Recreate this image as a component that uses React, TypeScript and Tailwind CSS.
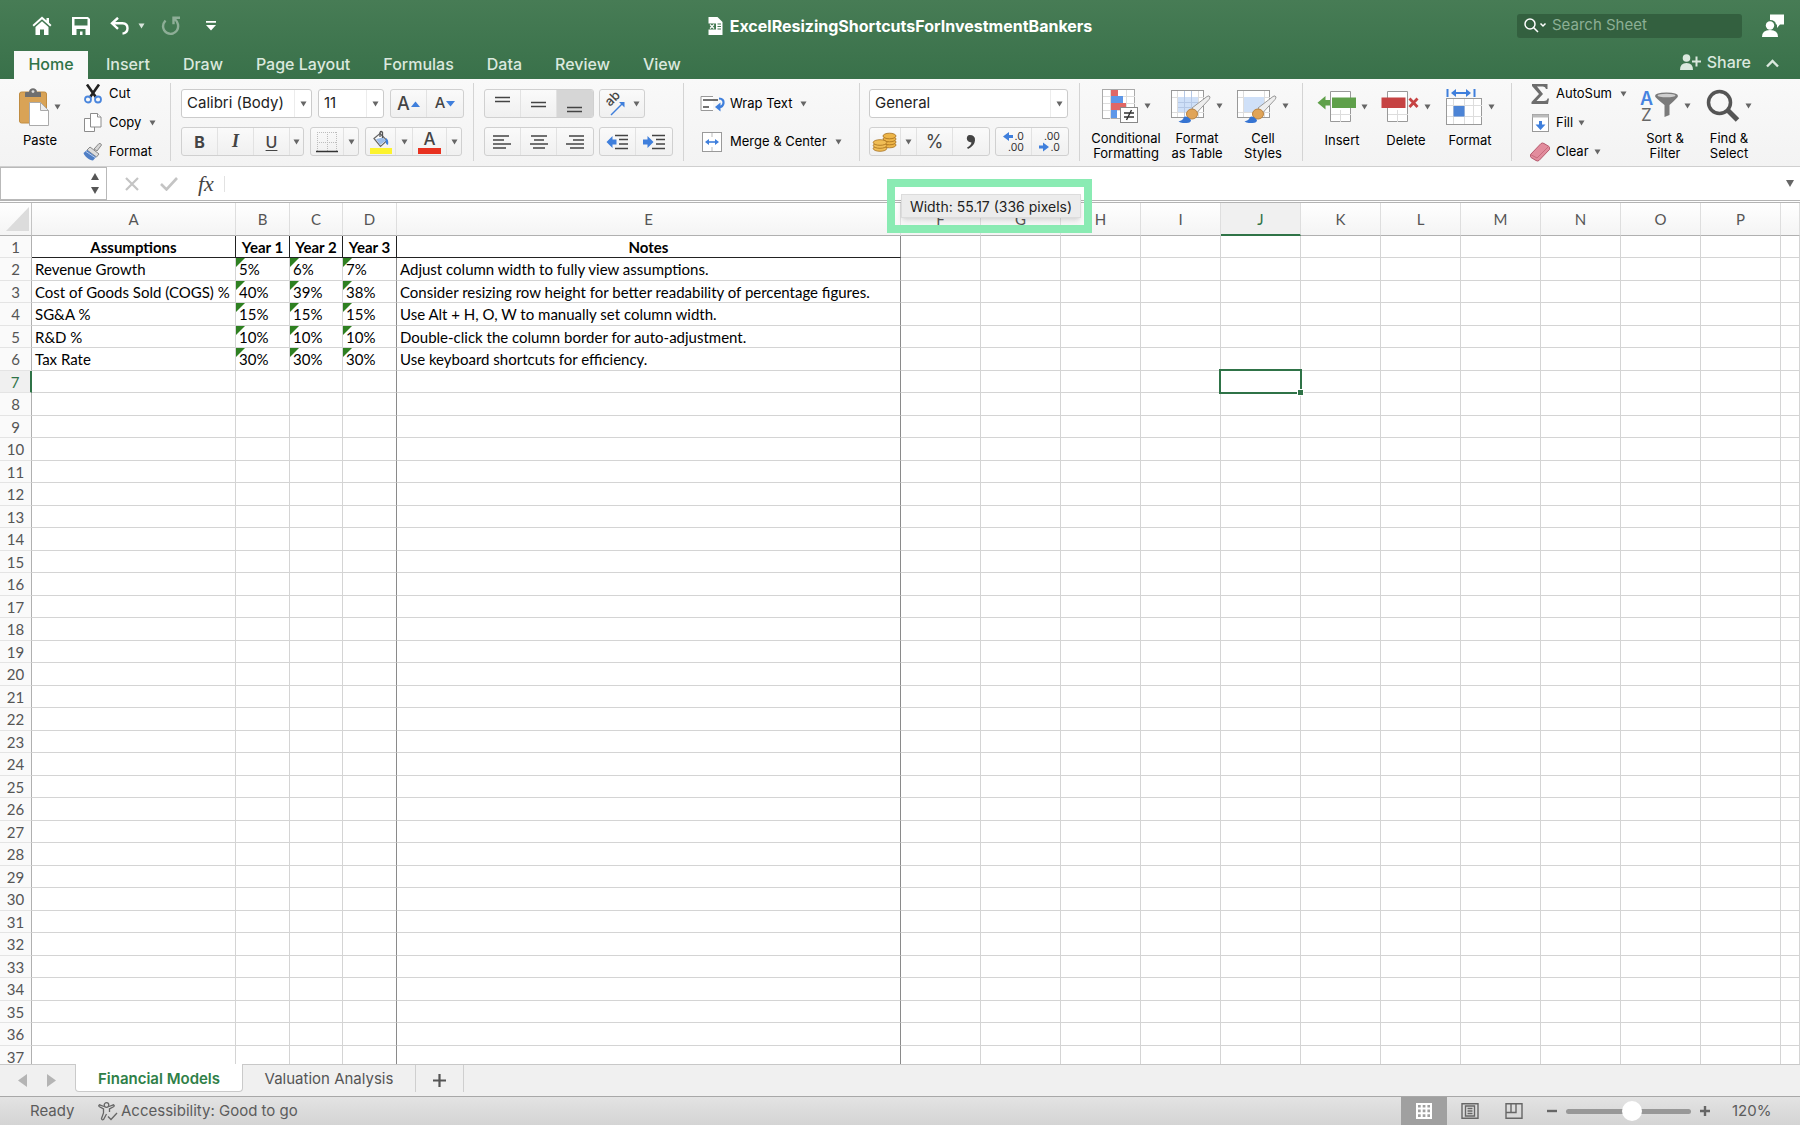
import type { ReactNode } from "react";

interface Row {
  label: string;
  years: string[];
  note: string;
}

const menuTabs = ["Insert", "Draw", "Page Layout", "Formulas", "Data", "Review", "View"];

const columns = ["A", "B", "C", "D", "E", "F", "G", "H", "I", "J", "K", "L", "M", "N", "O", "P", ""];

const assumptions: Row[] = [
  { label: "Revenue Growth", years: ["5%", "6%", "7%"], note: "Adjust column width to fully view assumptions." },
  {
    label: "Cost of Goods Sold (COGS) %",
    years: ["40%", "39%", "38%"],
    note: "Consider resizing row height for better readability of percentage figures.",
  },
  { label: "SG&A %", years: ["15%", "15%", "15%"], note: "Use Alt + H, O, W to manually set column width." },
  { label: "R&D %", years: ["10%", "10%", "10%"], note: "Double-click the column border for auto-adjustment." },
  { label: "Tax Rate", years: ["30%", "30%", "30%"], note: "Use keyboard shortcuts for efficiency." },
];

const headings = ["Assumptions", "Year 1", "Year 2", "Year 3", "Notes"];
const rowNumbers = Array.from({ length: 37 }, (_, i) => i + 1);

const Caret = ({ className = "text-[#666]" }: { className?: string }) => (
  <svg width="7" height="6" viewBox="0 0 7 6" className={`shrink-0 ${className}`} fill="currentColor">
    <path d="M0.5 0.5h6L3.5 5.5z" />
  </svg>
);

const Group = ({ className, children }: { className: string; children: ReactNode }) => (
  <div className={`flex shrink-0 border-r border-[#d4d4d4] ${className}`}>{children}</div>
);

const ButtonBar = ({ children }: { children: ReactNode }) => (
  <div className="flex h-[29px] shrink-0 divide-x divide-[#e2e2e2] overflow-hidden rounded-[3px] border border-[#d0d0d0] bg-linear-to-b from-[#fafafa] to-[#f0f0f0]">
    {children}
  </div>
);

interface BarButtonProps {
  label: string;
  width?: string;
  active?: boolean;
  children: ReactNode;
}

const BarButton = ({ label, width = "w-9", active = false, children }: BarButtonProps) => (
  <button
    type="button"
    aria-label={label}
    className={`flex items-center justify-center ${width} ${active ? "bg-[#d6d6d6]" : ""}`}
  >
    {children}
  </button>
);

interface PickerProps {
  label: string;
  value: string;
  width: string;
}

const Picker = ({ label, value, width }: PickerProps) => (
  <div className={`relative h-[29px] shrink-0 ${width}`}>
    <select
      aria-label={label}
      className="h-full w-full appearance-none rounded-[3px] border border-[#cbcbcb] bg-white pl-[5px] text-[15px] text-[#222]"
    >
      <option>{value}</option>
    </select>
    <span className="pointer-events-none absolute inset-y-px right-px flex w-[17px] items-center justify-center border-l border-[#ececec]">
      <Caret />
    </span>
  </div>
);

interface BigButtonProps {
  label: string;
  second?: string;
  width: string;
  icon: ReactNode;
}

const BigButton = ({ label, second, width, icon }: BigButtonProps) => (
  <button type="button" className={`flex shrink-0 flex-col items-center ${width}`}>
    <span className="flex h-12 items-center gap-[5px]">
      {icon}
      <Caret />
    </span>
    <span className="mt-[2px] block text-[13px] leading-[15px] whitespace-nowrap">
      {label}
      {second && <span className="block">{second}</span>}
    </span>
  </button>
);

interface SmallButtonProps {
  label: string;
  icon: ReactNode;
  caret?: string;
}

const SmallButton = ({ label, icon, caret }: SmallButtonProps) => (
  <button type="button" className="flex h-[29px] shrink-0 items-center text-[13px] whitespace-nowrap">
    <span className="mr-[7px] flex w-[18px] shrink-0 justify-center">{icon}</span>
    {label}
    {caret && <Caret className={`text-[#666] ${caret}`} />}
  </button>
);

/* ============================ Icons ============================ */

const Lines = ({ d }: { d: string }) => (
  <svg width="20" height="20" viewBox="0 0 20 20" stroke="#444" strokeWidth="1.4" fill="none">
    <path d={d} />
  </svg>
);

const PasteIcon = () => (
  <svg width="30" height="38" viewBox="0 0 30 38">
    <rect x="0.5" y="4" width="27" height="31" rx="2" fill="#d9a356" stroke="#c08c41" />
    <path d="M6 9V5q0-1 1-1h3c0-5 8-5 8 0h3q1 0 1 1v4z" fill="#6f6f6f" />
    <circle cx="14" cy="3.6" r="1.4" fill="#ddd" />
    <path d="M10.5 14.5h11l8 8v15h-19z" fill="#fff" stroke="#aaa" />
    <path d="M21.5 14.5v8h8z" fill="#ececec" stroke="#aaa" />
  </svg>
);

const CutIcon = () => (
  <svg width="18" height="20" viewBox="0 0 18 20" fill="none">
    <path d="M3 0.5L12.500 14M15 0.5L5.500 14" stroke="#222" strokeWidth="2.6" />
    <circle cx="4" cy="15.5" r="3" stroke="#4a86dd" strokeWidth="1.8" />
    <circle cx="14" cy="15.5" r="3" stroke="#4a86dd" strokeWidth="1.8" />
  </svg>
);

const CopyIcon = () => (
  <svg width="18" height="20" viewBox="0 0 18 20" fill="#fff" stroke="#8c8c8c">
    <path d="M0.5 5.5h7l3 3v10h-10z" />
    <path d="M6.5 0.5h7l3.5 3.5v10h-10.5z" />
    <path d="M13.5 0.5v3.5h3.5" />
  </svg>
);

const BrushIcon = () => (
  <svg width="20" height="18" viewBox="0 0 20 18" className="shrink-0">
    <path d="M11 6l5-5.500q2-.5 2.500 1.500L14 8z" fill="#d5d5d5" stroke="#888" />
    <path d="M7 4l9 7-2.500 3-9.500-7z" fill="#ddd" stroke="#888" />
    <path d="M4 7l9 7-3 3.500C6 17 2 14 0.500 10z" fill="#4f7fc6" />
    <path d="M3 8.500l9 6" stroke="#b9cdec" />
  </svg>
);

const BucketIcon = () => (
  <svg width="24" height="24" viewBox="0 0 24 24" fill="none">
    <path d="M5 8.500l6-5 7 7-6.500 6z" fill="#fff" stroke="#666" strokeWidth="1.2" />
    <path d="M7 9l4 6 6-4.500-3-3z" fill="#9dbde9" />
    <path d="M11 7V2.500q1-2 2.500 0V8" stroke="#555" strokeWidth="1.3" />
    <path d="M17 8q3 2 2 7-2.500-1-2.500-4z" fill="#3f7fdc" />
    <rect x="1" y="18" width="22" height="6" fill="#fcf32e" />
  </svg>
);

const BordersIcon = () => (
  <svg width="22" height="22" viewBox="0 0 22 22" fill="none">
    <path d="M1 1.500h20M1 11.500h20M1.500 1v20M11.500 1v20M20.500 1v20" stroke="#bdbdbd" strokeDasharray="1 1" />
    <path d="M0 20.500h22" stroke="#333" strokeWidth="1.5" />
  </svg>
);

const OrientIcon = () => (
  <svg width="22" height="22" viewBox="0 0 22 22" className="overflow-visible">
    <text transform="translate(6 14) rotate(-45)" fontSize="13" fontWeight="500" fontFamily="Inter" fill="#444">
      ab
    </text>
    <path d="M7 22l11-11" stroke="#3f7fdc" strokeWidth="1.5" />
    <path d="M20.500 9v5.500l-5.500-5.500z" fill="#3f7fdc" />
  </svg>
);

const IndentIcon = ({ right = false }: { right?: boolean }) => (
  <svg width="23" height="16" viewBox="0 0 23 16">
    <path d="M9 1.500h13M13 5.500h9M13 10h9M9 14.500h13" stroke="#444" strokeWidth="1.4" />
    {right ? (
      <path d="M0 5.500h4.500v-3.500l6 6-6 6v-3.500h-4.500z" fill="#3f7fdc" />
    ) : (
      <path d="M10.500 5.500h-4v-3.500l-6 6 6 6v-3.500h4z" fill="#3f7fdc" />
    )}
  </svg>
);

const WrapIcon = () => (
  <svg width="26" height="18" viewBox="0 0 26 18" fill="none">
    <path d="M13 1.500H1v14h12" fill="#fff" stroke="#999" />
    <path d="M3 5h15M3 12h6" stroke="#444" strokeWidth="1.3" />
    <path d="M19 3.500q5 .5 4.500 4.500-.5 4-4.500 4" stroke="#3f7fdc" strokeWidth="2.2" />
    <path d="M20.500 7.500v9l-5.500-4.500z" fill="#3f7fdc" />
  </svg>
);

const MergeIcon = () => (
  <svg width="26" height="20" viewBox="0 0 26 20">
    <rect x="2.5" y="0.5" width="19" height="19" fill="#fff" stroke="#9a9a9a" />
    <path d="M12 1v4M12 15v4" stroke="#bbb" />
    <path d="M7 10h10" stroke="#3f7fdc" strokeWidth="1.6" />
    <path d="M9 7v6L5 10zM15 7v6l4-3z" fill="#3f7fdc" />
  </svg>
);

const CoinsIcon = () => (
  <svg width="26" height="20" viewBox="0 0 26 20" stroke="#a66f1c" strokeWidth="0.8">
    {[13, 10, 7, 4].map((y) => (
      <ellipse key={y} cx="17.5" cy={y} rx="6.5" ry="2.8" fill="#edb548" />
    ))}
    {[16.5, 13.5, 10.5].map((y) => (
      <ellipse key={y} cx="8" cy={y} rx="6.8" ry="2.8" fill="#f0bd55" />
    ))}
  </svg>
);

const DecimalIcon = ({ more = false }: { more?: boolean }) => (
  <svg width="24" height="22" viewBox="0 0 24 22" fontFamily="Inter" fontSize="10.5" fill="#333">
    {more ? (
      <>
        <path d="M11 4h-4V1L1 5.500 7 10V7h4z" fill="#3f7fdc" />
        <text x="22" y="9" textAnchor="end">.0</text>
        <text x="22" y="20" textAnchor="end">.00</text>
      </>
    ) : (
      <>
        <path d="M1 14.500h4v-3l6 4.500-6 4.500v-3h-4z" fill="#3f7fdc" />
        <text x="22" y="9" textAnchor="end">.00</text>
        <text x="22" y="20" textAnchor="end">.0</text>
      </>
    )}
  </svg>
);

const ConditionalIcon = () => (
  <svg width="37" height="34" viewBox="0 0 37 34">
    <rect x="0.5" y="0.5" width="32" height="29" fill="#fff" stroke="#aaa" />
    <path d="M1 7.500h32M1 14.500h32M1 21.500h32M8.500 1v29M24.500 1v29" stroke="#ddd" />
    <path d="M9 1h7v6H9zM9 14h15v7H9z" fill="#e06766" />
    <path d="M9 7h12v7H9zM9 21h6v8H9z" fill="#5d97e8" />
    <rect x="18.5" y="18.5" width="17" height="15" fill="#fff" stroke="#888" />
    <path d="M22 24h10M22 28h10M29.500 21l-5 10" stroke="#333" strokeWidth="1.4" />
  </svg>
);

const StyleIcon = ({ table = false }: { table?: boolean }) => (
  <svg width="40" height="34" viewBox="0 0 40 34">
    <rect x="0.5" y="1.5" width="32" height="27" fill="#fff" stroke="#999" />
    <path d="M1 8.500h32M6.500 2v26M27.500 2v26M1 23.500h32" stroke="#ddd" />
    <rect x="7" y="8" width="20" height="15" fill="#cfe0f8" />
    {table && <path d="M7 13.500h20M7 18.500h20M13.500 2v26M20.500 2v26" stroke="#b5c8e6" />}
    <path d="M21 19L36 7.500q2.500-1.500 3 .5 0 1-1 2.500L25.500 24z" fill="#eee" stroke="#999" />
    <ellipse cx="21" cy="25" rx="5.500" ry="5" fill="#e0a458" stroke="#b98341" />
    <path d="M7.500 32.500q4.500-1 5.500-4.500 3-2 7 3 0 3-4.500 3-5 .5-8-1.500z" fill="#3674d2" />
  </svg>
);

const InsertIcon = () => (
  <svg width="39" height="34" viewBox="0 0 39 34">
    <path d="M13.500 1.500h20v30h-20z" fill="#fff" stroke="#999" />
    <path d="M14 24.500h20M23.500 20v12" stroke="#ddd" />
    <rect x="15" y="7.500" width="24" height="10.500" fill="#5fa04a" />
    <path d="M13 10v5.500H8.500v4L0.500 12.700l8-6.700v4z" fill="#5fa04a" />
  </svg>
);

const DeleteIcon = () => (
  <svg width="38" height="34" viewBox="0 0 38 34">
    <path d="M6.500 1.500h20v30h-20z" fill="#fff" stroke="#999" />
    <path d="M7 24.500h20M16.500 20v12" stroke="#ddd" />
    <rect x="0.5" y="7.500" width="24" height="10.500" fill="#c64343" />
    <path d="M28.500 8.500l8 8.500M36.500 8.500l-8 8.500" stroke="#c64343" strokeWidth="2.8" />
  </svg>
);

const FormatIcon = () => (
  <svg width="37" height="36" viewBox="0 0 37 36">
    <path d="M1.500 0v8M28.500 0v8M8 4h14" stroke="#3f7fdc" strokeWidth="2" />
    <path d="M10 0v8L5 4zM20 0v8l5-4z" fill="#3f7fdc" />
    <rect x="0.5" y="9.500" width="35" height="26" fill="#fff" stroke="#999" />
    <path d="M1 16.500h35M1 27.500h35M7.500 10v25M18.500 10v25M27.500 10v25" stroke="#ddd" />
    <rect x="7.5" y="17" width="11" height="10.500" fill="#4c84d6" />
  </svg>
);

const SumIcon = () => (
  <svg width="18" height="20" viewBox="0 0 18 20" fill="#6d6d6d">
    <path d="M1 0h15.500v5h-1.500q-.5-2.500-3-2.500H6l6 7.500-6.500 7H13q3 0 3.500-2.500H18l-1 5.500H0.500v-2l7.500-8-7-8z" />
  </svg>
);

const FillIcon = () => (
  <svg width="17" height="18" viewBox="0 0 17 18">
    <rect x="0.5" y="0.5" width="16" height="17" fill="#fff" stroke="#999" />
    <rect x="0.5" y="0.5" width="16" height="3" fill="#bbb" />
    <path d="M7 7h3v3.500h3.500L8.500 16 3.500 10.500H7z" fill="#3f7fdc" />
  </svg>
);

const EraserIcon = () => (
  <svg width="20" height="20" viewBox="0 0 20 20" className="shrink-0">
    <path
      d="M0.500 12.500L11 1.500q1.500-1 3 0l5 3q1 1 .5 3L9 18.500q-1.500 1-3 0L1 15.500q-1-1-.5-3z"
      fill="#e28c9d"
      stroke="#b5586c"
    />
    <path d="M0.500 12.500l6.500 3.500L18.500 4.500" stroke="#c76b7e" fill="none" />
  </svg>
);

const SortIcon = () => (
  <svg width="40" height="34" viewBox="0 0 40 34" fontFamily="Inter">
    <text x="1" y="16" fontSize="18" fontWeight="600" fill="#4683e0">A</text>
    <text x="2" y="32" fontSize="17" fill="#666">Z</text>
    <path d="M16 7q0-3.500 11.500-3.500T39 7q0 1.500-8.500 9v10l-5 2V16Q16 8.500 16 7z" fill="#7a7a7a" />
    <ellipse cx="27.5" cy="6.5" rx="9" ry="1.8" fill="#cfcfcf" />
  </svg>
);

const FindIcon = () => (
  <svg width="34" height="34" viewBox="0 0 34 34" fill="none">
    <circle cx="13.5" cy="13.5" r="11" stroke="#555" strokeWidth="3.5" />
    <path d="M22 21.500l9.500 9.500" stroke="#555" strokeWidth="5" />
  </svg>
);

/* ============================ Title bar ============================ */

const TitleBar = () => (
  <header className="shrink-0 bg-linear-to-b from-[#477c55] to-[#39714a] text-white">
    <div className="grid h-[51px] grid-cols-[1fr_auto_1fr] items-center">
      <div className="flex items-center pl-8">
        <button type="button" aria-label="Home">
          <svg width="20" height="20" viewBox="0 0 20 20" fill="white">
            <path d="M10 0.500L0.500 9l1.300 1.500L10 3.200l8.200 7.300L19.500 9 17 6.800V2h-2.500v2.500z" />
            <path d="M3.500 11L10 5.200l6.500 5.800v8H12v-5.500H8V19H3.500z" />
          </svg>
        </button>
        <button type="button" aria-label="Save" className="ml-5">
          <svg width="18" height="18" viewBox="0 0 18 18" fill="white">
            <path fillRule="evenodd" d="M0 0h16l2 2v16H0zM2.500 2v6.500h13V2zM4.500 12v6H8v-3.500h2.500V18h3v-6z" />
          </svg>
        </button>
        <button type="button" aria-label="Undo" className="ml-5 flex items-center gap-2">
          <svg width="20" height="18" viewBox="0 0 20 18" fill="none" stroke="white" strokeWidth="2.4">
            <path d="M8 0.800L2 6.300l6 5.500M2 6.300h10.500q5 .3 5 5t-5 5.300" />
          </svg>
          <Caret className="text-white/80" />
        </button>
        <button type="button" aria-label="Redo" className="ml-4">
          <svg width="20" height="20" viewBox="0 0 20 20" fill="none" stroke="white" strokeOpacity="0.4" strokeWidth="2.4">
            <path d="M4.500 4.500Q0.500 9 3 14q3.500 5 9 3.500 6-2.500 5-9-.5-3-4-6.500M19 1.800h-6.500v6.500" />
          </svg>
        </button>
        <button type="button" aria-label="Customize toolbar" className="ml-6">
          <svg width="12" height="10" viewBox="0 0 12 10" fill="white">
            <path d="M1 0h10v1.800H1zM1 4h10L6 9.500z" />
          </svg>
        </button>
      </div>
      <h1 className="flex items-center gap-[7px] text-base font-bold">
        <svg width="15" height="18" viewBox="0 0 15 18">
          <path d="M0.500 0h9l5 5v13h-14z" fill="white" />
          <path d="M0 6.500h8v6H0z" fill="#41774f" />
          <path d="M2 7.500l4 4M6 7.500l-4 4" stroke="white" strokeWidth="1.2" />
          <path d="M9.500 7h3.500M9.500 9.500h3.500M9.500 12h3.500" stroke="#41774f" />
        </svg>
        ExcelResizingShortcutsForInvestmentBankers
      </h1>
      <div className="flex items-center justify-end pr-4">
        <label className="flex h-6 w-[225px] items-center rounded-[3px] bg-[#33603f] pl-[7px]">
          <svg width="23" height="15" viewBox="0 0 23 15" fill="none" stroke="white" strokeWidth="1.5">
            <circle cx="6" cy="6" r="5" />
            <path d="M9.500 9.500l4.500 4.500M16.500 5.500l2.500 2.500 2.500-2.500" />
          </svg>
          <input
            type="text"
            aria-label="Search Sheet"
            placeholder="Search Sheet"
            className="ml-[5px] w-40 bg-transparent text-[15px] outline-none placeholder:text-[#8caf95]"
          />
        </label>
        <button type="button" aria-label="Comments" className="ml-5">
          <svg width="22" height="24" viewBox="0 0 22 24" fill="white">
            <path d="M8 0.500h14v10h-4L15 14v-3.500h-1Q13.500 6 8 6z" />
            <circle cx="8" cy="11.500" r="4.200" />
            <path d="M0 23q0-7 8-7t8 7z" />
          </svg>
        </button>
      </div>
    </div>

    <nav className="flex h-7 items-center pl-[14px] text-base font-medium text-[#dbe8de]">
      <button type="button" className="h-7 w-[74px] bg-[#f9f9f9] pb-[2px] text-[#2f7347]">
        Home
      </button>
      <div className="flex gap-[33px] pl-[18px]">
        {menuTabs.map((tab) => (
          <button key={tab} type="button" className="pb-[2px] whitespace-nowrap">
            {tab}
          </button>
        ))}
      </div>
      <button type="button" className="mr-[15px] mb-[6px] ml-auto flex items-center gap-[6px]">
        <svg width="21" height="16" viewBox="0 0 21 16" fill="currentColor">
          <circle cx="6.5" cy="4" r="3.8" />
          <path d="M0 16q0-7 6.500-7T13 16zM15.500 2.500h2v4h3.500v2h-3.500v4h-2v-4H12v-2h3.500z" />
        </svg>
        Share
      </button>
      <button type="button" aria-label="Collapse ribbon" className="mr-[21px] mb-1">
        <svg width="13" height="9" viewBox="0 0 13 9" fill="none" stroke="currentColor" strokeWidth="2.4">
          <path d="M1 7.500L6.500 2 12 7.500" />
        </svg>
      </button>
    </nav>
  </header>
);

/* ============================ Ribbon ============================ */

const Ribbon = () => (
  <div className="flex h-22 shrink-0 overflow-hidden border-b border-[#cfcfcf] bg-linear-to-b from-[#f9f9f9] to-[#f3f3f3] pt-1 pb-[5px] text-black">
    <Group className="w-[171px] pl-2">
      <BigButton label="Paste" width="w-16" icon={<PasteIcon />} />
      <div className="-mt-1 ml-3 flex flex-col">
        <SmallButton label="Cut" icon={<CutIcon />} />
        <SmallButton label="Copy" icon={<CopyIcon />} caret="ml-2" />
        <SmallButton label="Format" icon={<BrushIcon />} />
      </div>
    </Group>

    <Group className="w-[303px] flex-col gap-[9px] pt-[6px] pl-[10px]">
      <div className="flex gap-[6px]">
        <Picker label="Font" value="Calibri (Body)" width="w-[131px]" />
        <Picker label="Font size" value="11" width="w-[66px]" />
        <ButtonBar>
          <BarButton label="Increase font size">
            <span className="mr-px text-[18px] font-medium text-[#444]">A</span>
            <svg width="9" height="6" viewBox="0 0 9 6" fill="#3f7fdc"><path d="M0 6l4.500-5.500L9 6z" /></svg>
          </BarButton>
          <BarButton label="Decrease font size">
            <span className="mr-px text-[15px] font-medium text-[#444]">A</span>
            <svg width="9" height="6" viewBox="0 0 9 6" fill="#3f7fdc"><path d="M0 0l4.500 5.500L9 0z" /></svg>
          </BarButton>
        </ButtonBar>
      </div>
      <div className="flex gap-[6px] text-[#444]">
        <ButtonBar>
          <BarButton label="Bold"><b className="text-base">B</b></BarButton>
          <BarButton label="Italic"><i className="font-['Liberation_Serif'] text-[18px] font-bold">I</i></BarButton>
          <BarButton label="Underline"><u className="text-base font-medium underline-offset-2">U</u></BarButton>
          <BarButton label="Underline options" width="w-[13px]"><Caret /></BarButton>
        </ButtonBar>
        <ButtonBar>
          <BarButton label="Borders" width="w-[33px]"><BordersIcon /></BarButton>
          <BarButton label="Border options" width="w-[14px]"><Caret /></BarButton>
        </ButtonBar>
        <ButtonBar>
          <BarButton label="Fill color" width="w-[30px]"><BucketIcon /></BarButton>
          <BarButton label="Fill color options" width="w-[17px]"><Caret /></BarButton>
          <BarButton label="Font color" width="w-[34px]">
            <span className="border-b-[6px] border-[#e8311f] px-[5px] text-[17px] leading-[18px] font-medium">A</span>
          </BarButton>
          <BarButton label="Font color options" width="w-[14px]"><Caret /></BarButton>
        </ButtonBar>
      </div>
    </Group>

    <Group className="w-[210px] flex-col gap-[9px] pt-[6px] pl-[10px]">
      <div className="flex gap-[5px]">
        <ButtonBar>
          <BarButton label="Top align"><Lines d="M2 3.500h15M2 7.500h15" /></BarButton>
          <BarButton label="Middle align"><Lines d="M2 8.500h15M2 12.500h15" /></BarButton>
          <BarButton label="Bottom align" active><Lines d="M2 13.500h15M2 17.500h15" /></BarButton>
        </ButtonBar>
        <ButtonBar>
          <BarButton label="Orientation" width="w-11 gap-[7px]"><OrientIcon /><Caret /></BarButton>
        </ButtonBar>
      </div>
      <div className="flex gap-[5px]">
        <ButtonBar>
          <BarButton label="Align left"><Lines d="M0 4h16M0 8h11M0 12h18M0 16h13" /></BarButton>
          <BarButton label="Center"><Lines d="M2 4h16M5 8h10M1 12h18M4 16h12" /></BarButton>
          <BarButton label="Align right"><Lines d="M4 4h15M8 8h11M1 12h18M5 16h14" /></BarButton>
        </ButtonBar>
        <ButtonBar>
          <BarButton label="Decrease indent"><IndentIcon /></BarButton>
          <BarButton label="Increase indent"><IndentIcon right /></BarButton>
        </ButtonBar>
      </div>
    </Group>

    <Group className="w-[176px] flex-col gap-2 pt-[6px] pl-4">
      <button type="button" className="flex h-[30px] items-center text-[13px]">
        <span className="mr-1"><WrapIcon /></span>Wrap Text<Caret className="ml-2 text-[#666]" />
      </button>
      <button type="button" className="flex h-[30px] items-center text-[13px] whitespace-nowrap">
        <span className="mr-1"><MergeIcon /></span>Merge &amp; Center<Caret className="ml-2 text-[#666]" />
      </button>
    </Group>

    <Group className="w-[220px] flex-col gap-[9px] pt-[6px] pl-[9px]">
      <Picker label="Number format" value="General" width="w-[199px]" />
      <div className="flex gap-[5px] text-[#444]">
        <ButtonBar>
          <BarButton label="Currency" width="w-[31px]"><CoinsIcon /></BarButton>
          <BarButton label="Currency options" width="w-[16px]"><Caret /></BarButton>
          <BarButton label="Percent"><span className="text-[18px]">%</span></BarButton>
          <BarButton label="Comma style">
            <svg width="10" height="14" viewBox="0 0 10 14" fill="#444">
              <path d="M3.500 0Q9.500 0 9 5.500 8.500 11 2 14l-1-1.500q4-2 4.500-5Q1 7 0.800 3.500 1 0.300 3.500 0z" />
            </svg>
          </BarButton>
        </ButtonBar>
        <ButtonBar>
          <BarButton label="Increase decimal"><DecimalIcon more /></BarButton>
          <BarButton label="Decrease decimal"><DecimalIcon /></BarButton>
        </ButtonBar>
      </div>
    </Group>

    <Group className="w-[223px] gap-1 pl-[10px]">
      <BigButton label="Conditional" second="Formatting" width="w-[72px]" icon={<ConditionalIcon />} />
      <BigButton label="Format" second="as Table" width="w-[62px]" icon={<StyleIcon table />} />
      <BigButton label="Cell" second="Styles" width="w-[62px]" icon={<StyleIcon />} />
    </Group>

    <Group className="w-[209px] gap-1 pl-[9px]">
      <BigButton label="Insert" width="w-[60px]" icon={<InsertIcon />} />
      <BigButton label="Delete" width="w-[60px]" icon={<DeleteIcon />} />
      <BigButton label="Format" width="w-[60px]" icon={<FormatIcon />} />
    </Group>

    <div className="flex shrink-0 gap-1 pl-[19px]">
      <div className="-mt-1 flex w-[100px] flex-col">
        <SmallButton label="AutoSum" icon={<SumIcon />} caret="ml-2" />
        <SmallButton label="Fill" icon={<FillIcon />} caret="ml-[5px]" />
        <SmallButton label="Clear" icon={<EraserIcon />} caret="ml-[5px]" />
      </div>
      <BigButton label="Sort &" second="Filter" width="w-[60px]" icon={<SortIcon />} />
      <BigButton label="Find &" second="Select" width="w-[60px]" icon={<FindIcon />} />
    </div>
  </div>
);

/* ============================ Formula bar ============================ */

const FormulaBar = () => (
  <div className="flex h-9 shrink-0 items-center border-b-[3px] border-double border-[#b4b4b4] bg-white">
    <div className="flex h-full w-[107px] items-center border border-[#b9b9b9]">
      <input type="text" aria-label="Name box" className="h-full w-[90px] outline-none" />
      <span className="flex flex-col gap-[7px] text-[#555]">
        <svg width="8" height="7" viewBox="0 0 8 7" fill="currentColor"><path d="M0 7L4 0l4 7z" /></svg>
        <svg width="8" height="7" viewBox="0 0 8 7" fill="currentColor"><path d="M0 0l4 7 4-7z" /></svg>
      </span>
    </div>
    <button type="button" aria-label="Cancel" className="ml-[18px]">
      <svg width="14" height="14" viewBox="0 0 14 14" stroke="#c4c4c4" strokeWidth="2.2"><path d="M1 1l12 12M13 1L1 13" /></svg>
    </button>
    <button type="button" aria-label="Enter" className="ml-[21px]">
      <svg width="18" height="14" viewBox="0 0 18 14" fill="none" stroke="#c4c4c4" strokeWidth="2.6"><path d="M1 7l5.500 5.500L17 1" /></svg>
    </button>
    <button
      type="button"
      aria-label="Insert function"
      className="ml-5 font-['Liberation_Serif'] text-[22px] leading-6 text-[#444] italic"
    >
      fx
    </button>
    <input type="text" aria-label="Formula" className="ml-[10px] h-4 flex-1 border-l border-[#e2e2e2] outline-none" />
    <button type="button" aria-label="Expand formula bar" className="mr-[6px] text-[#666]">
      <svg width="8" height="7" viewBox="0 0 8 7" fill="currentColor"><path d="M0 0l4 7 4-7z" /></svg>
    </button>
  </div>
);

/* ============================ Sheet ============================ */

const cellBorder = (row: number, col: number) => {
  const bottom = row === 1 && col < 5 ? "border-b-[#222]" : "border-b-[#d4d4d4]";
  let right = "border-r-[#d4d4d4]";
  if (row === 1 && col < 4) right = "border-r-[#222]";
  else if (col === 3 || col === 4) right = "border-r-[#8a8a8a]";
  return `${bottom} ${right}`;
};

const cellText = (row: number, col: number) => {
  if (row === 1) return headings[col] ?? "";
  const item = assumptions[row - 2];
  if (!item || col > 4) return "";
  if (col === 0) return item.label;
  return col === 4 ? item.note : item.years[col - 1];
};

const Sheet = () => (
  <main className="relative min-h-0 flex-1 overflow-hidden bg-white">
    <table className="w-full table-fixed border-separate border-spacing-0 font-['Lato',sans-serif] text-[15px] leading-5 text-black">
      <colgroup>
        <col className="w-8" />
        <col className="w-[204px]" />
        <col className="w-[54px]" />
        <col className="w-[53px]" />
        <col className="w-[54px]" />
        <col className="w-[504px]" />
        {columns.slice(5, 16).map((name) => (
          <col key={name} className="w-20" />
        ))}
        <col />
      </colgroup>
      <thead>
        <tr className="h-[33px] bg-linear-to-b from-white to-[#f4f4f4]">
          <th aria-label="Select all" className="border-r border-b border-r-[#c4c4c4] border-b-[#b0b0b0] p-0">
            <svg width="24" height="24" viewBox="0 0 24 24" className="ml-[6px]"><path d="M23 0v24H0z" fill="#dcdcdc" /></svg>
          </th>
          {columns.map((name) => (
            <th
              key={name}
              className={`border-r border-r-[#dedede] p-0 text-[15px] font-normal ${
                name === "J"
                  ? "border-b-2 border-b-[#2f7347] bg-[#f0f0f0] text-[#2f7347]"
                  : "border-b border-b-[#b0b0b0] text-[#555]"
              }`}
            >
              {name}
            </th>
          ))}
        </tr>
      </thead>
      <tbody>
        {rowNumbers.map((row) => (
          <tr key={row} className={row % 2 ? "h-[22px]" : "h-[23px]"}>
            <th
              className={`border-b border-b-[#e4e4e4] p-0 text-[15px] leading-5 font-normal ${
                row === 7
                  ? "border-r-2 border-r-[#2f7347] bg-[#f0f0f0] text-[#2f7347]"
                  : "border-r border-r-[#b0b0b0] bg-[#fafafa] text-[#555]"
              }`}
            >
              {row}
            </th>
            {columns.map((name, col) => (
              <td
                key={name}
                className={`relative border-r border-b py-0 pr-0 whitespace-nowrap ${cellBorder(row, col)} ${
                  row === 1 ? "pl-0 text-center font-bold" : "pl-[3px]"
                }`}
              >
                {row > 1 && row < 7 && col > 0 && col < 4 && (
                  <svg width="9" height="9" viewBox="0 0 9 9" className="absolute top-0 left-0">
                    <path d="M0 0h9L0 9z" fill="#2e8021" />
                  </svg>
                )}
                <span className="relative">{cellText(row, col)}</span>
                {row === 7 && name === "J" && (
                  <span className="absolute -inset-[2px] z-10 border-2 border-[#2f7347]">
                    <span className="absolute -right-1 -bottom-1 size-[7px] border border-white bg-[#2f7347]" />
                  </span>
                )}
              </td>
            ))}
          </tr>
        ))}
      </tbody>
    </table>
  </main>
);

/* ============================ Bottom bars ============================ */

const SheetTabs = () => (
  <div className="flex h-8 shrink-0 border-t border-[#c8c8c8] bg-[#f0f0f0] text-[15px] text-[#555]">
    <div className="flex w-[75px] items-center gap-5 pl-[18px]">
      <button type="button" aria-label="Previous sheet">
        <svg width="9" height="13" viewBox="0 0 9 13" fill="#b4b4b4"><path d="M9 0v13L0 6.500z" /></svg>
      </button>
      <button type="button" aria-label="Next sheet">
        <svg width="9" height="13" viewBox="0 0 9 13" fill="#b4b4b4"><path d="M0 0v13l9-6.500z" /></svg>
      </button>
    </div>
    <button
      type="button"
      className="-mt-px h-7 w-[168px] rounded-b-[4px] border border-t-0 border-[#cacaca] bg-white pt-[3px] font-semibold text-[#2f8048]"
    >
      Financial Models
    </button>
    <button type="button" className="h-[27px] w-[173px] border-r border-[#cfcfcf] pt-px">
      Valuation Analysis
    </button>
    <button
      type="button"
      aria-label="Add sheet"
      className="flex h-[27px] w-12 items-center justify-center border-r border-[#cfcfcf] pt-1"
    >
      <svg width="13" height="13" viewBox="0 0 13 13" stroke="#555" strokeWidth="2.2"><path d="M6.500 0v13M0 6.500h13" /></svg>
    </button>
  </div>
);

const StatusBar = () => (
  <footer className="flex h-[29px] shrink-0 items-center border-t border-[#a8a8a8] bg-linear-to-b from-[#e3e3e3] to-[#d4d4d4] text-[15px] text-[#5c5c5c]">
    <span className="ml-[30px] w-[68px]">Ready</span>
    <button type="button" className="flex items-center gap-[3px]">
      <svg width="20" height="19" viewBox="0 0 20 19" fill="none" stroke="#666" strokeWidth="1.3">
        <circle cx="8.5" cy="3" r="2.3" />
        <path d="M6 4.500L1.500 2.800q-1.500 1 0 2L5.500 7v4L3.500 16.500q.5 2 2 1L8.500 12M11 4.500l4.500-1.700q1.500 1 0 2L11.500 7v3M10 14.500l3 3L19 11" />
      </svg>
      Accessibility: Good to go
    </button>
    <div className="ml-auto flex h-full items-center">
      <button type="button" aria-label="Normal view" className="flex h-full w-[46px] items-center justify-center bg-[#a0a0a0]">
        <svg width="16" height="16" viewBox="0 0 16 16" fill="#fff">
          <path
            fillRule="evenodd"
            d="M0 0h16v16H0zM2 2v2.500h2.700V2zM6.700 2v2.500h2.700V2zM11.400 2v2.500H14V2zM2 6.600v2.700h2.700V6.600zM6.700 6.600v2.700h2.700V6.600zM11.400 6.600v2.700H14V6.600zM2 11.300V14h2.700v-2.700zM6.700 11.300V14h2.700v-2.700zM11.400 11.300V14H14v-2.700z"
          />
        </svg>
      </button>
      <button type="button" aria-label="Page layout view" className="ml-[14px]">
        <svg width="18" height="16" viewBox="0 0 18 16" fill="none" stroke="#666" strokeWidth="1.4">
          <path d="M1 0.700h16v14.600H1zM4.500 3h9v10h-9zM6.500 5.500h5M6.500 8h5M6.500 10.500h5" />
        </svg>
      </button>
      <button type="button" aria-label="Page break view" className="ml-[26px]">
        <svg width="18" height="16" viewBox="0 0 18 16" fill="none" stroke="#666" strokeWidth="1.4">
          <path d="M1 0.700h16v14.600H1zM1 9.500h10V1M6 1v8" />
        </svg>
      </button>
      <button type="button" aria-label="Zoom out" className="ml-6">
        <svg width="10" height="10" viewBox="0 0 10 10" stroke="#666" strokeWidth="2.4"><path d="M0 5h10" /></svg>
      </button>
      <input
        type="range"
        aria-label="Zoom"
        min={0}
        max={100}
        defaultValue={53}
        className="mx-[9px] h-[5px] w-[125px] appearance-none rounded-full bg-[#989898] [&::-webkit-slider-thumb]:size-5 [&::-webkit-slider-thumb]:appearance-none [&::-webkit-slider-thumb]:rounded-full [&::-webkit-slider-thumb]:bg-white"
      />
      <button type="button" aria-label="Zoom in">
        <svg width="10" height="10" viewBox="0 0 10 10" stroke="#666" strokeWidth="2.4"><path d="M5 0v10M0 5h10" /></svg>
      </button>
      <span className="mr-[29px] ml-[22px] w-[39px]">120%</span>
    </div>
  </footer>
);

const App = () => {
  return (
    <div className="relative flex h-screen flex-col overflow-hidden font-['Inter','Liberation_Sans',sans-serif]">
      <TitleBar />
      <Ribbon />
      <FormulaBar />
      <Sheet />
      <SheetTabs />
      <StatusBar />

      {/* column resize hint */}
      <div className="absolute top-[179px] left-[887px] z-20 h-[54px] w-[205px] border-8 border-[#8aebb3] pt-[7px] pl-[6px]">
        <div
          role="tooltip"
          className="flex h-6 w-[180px] items-center justify-center border border-[#dcdcdc] bg-[#ececec] text-[14px] whitespace-nowrap text-[#222] shadow-md"
        >
          Width: 55.17 (336 pixels)
        </div>
      </div>
    </div>
  );
};

export default App;
